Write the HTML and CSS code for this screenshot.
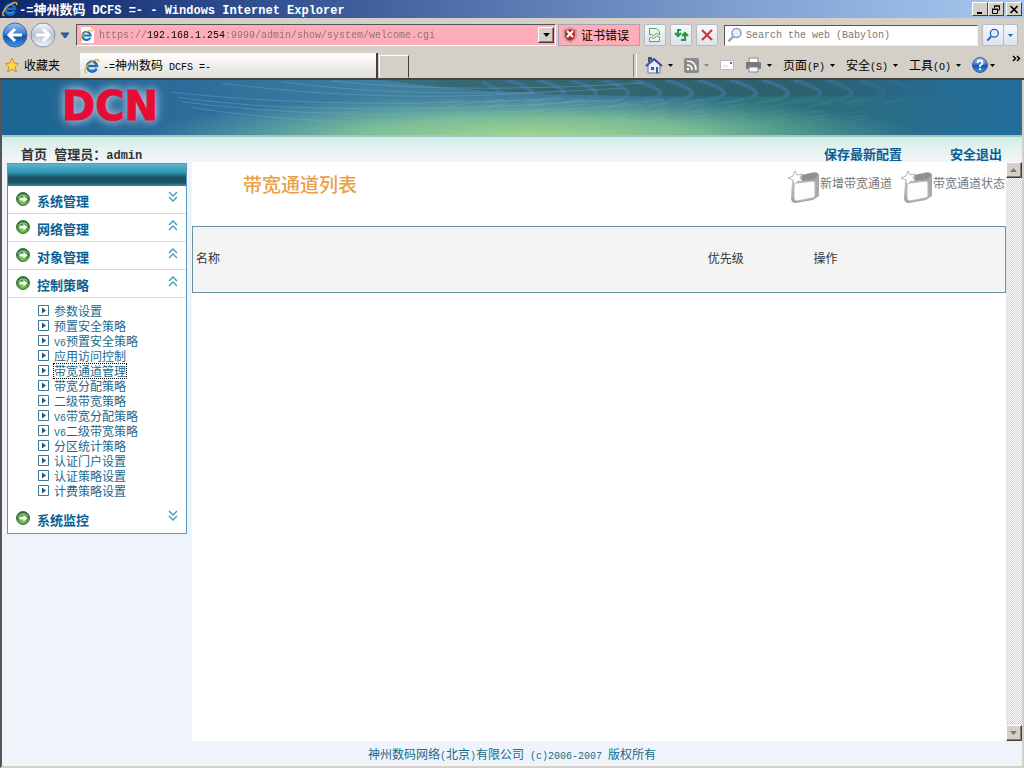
FILE: index.html
```html
<!DOCTYPE html>
<html lang="zh-CN">
<head>
  <meta charset="UTF-8">
  <meta name="viewport" content="width=device-width, initial-scale=1">
  <title>-=神州数码 DCFS =-</title>
  <link rel="stylesheet" href="styles.css">
</head>
<body>
  <!-- shared icons -->
  <svg class="defs" width="0" height="0" aria-hidden="true">
    <defs>
      <linearGradient id="blue" x1="0" y1="0" x2="0" y2="1"><stop offset="0" stop-color="#9cc4ee"/><stop offset=".45" stop-color="#3f7fd0"/><stop offset=".55" stop-color="#1450ac"/><stop offset="1" stop-color="#3f9be8"/></linearGradient>
      <linearGradient id="silver" x1="0" y1="0" x2="0" y2="1"><stop offset="0" stop-color="#f4f6fa"/><stop offset=".5" stop-color="#b8c1d2"/><stop offset="1" stop-color="#f2f5f9"/></linearGradient>
      <radialGradient id="green" cx=".5" cy=".7" r=".7"><stop offset="0" stop-color="#8ed052"/><stop offset="1" stop-color="#1c682a"/></radialGradient>
      <linearGradient id="folder" x1="0" y1="0" x2="1" y2="1"><stop offset="0" stop-color="#ddd"/><stop offset=".5" stop-color="#a0a0a0"/><stop offset="1" stop-color="#b4b4b4"/></linearGradient>
      <symbol id="ie" viewBox="0 0 16 16">
        <path d="M12.600 10.600A5 5 0 1 1 13 8H4.500" fill="none" stroke="#1c6cc4" stroke-width="2.600"/>
        <path d="M12 10A5 5 0 0 1 4 9.500" fill="none" stroke="#58b4ee" stroke-width="1"/>
        <path d="M2.500 14.500C-1 15 1 9 6 5S15.500 0 14.500 4" fill="none" stroke="#e8b82c" stroke-width="1.400"/>
      </symbol>
      <symbol id="go" viewBox="0 0 14 14">
        <circle cx="7" cy="7" r="6.500" fill="url(#green)" stroke="#3c7844"/>
        <path d="M2.500 5.500A5 4 0 0 1 11.500 5" fill="none" stroke="#b4d8b0"/>
        <path d="M3.500 5.800h4V3.800L11.500 7.200 7.500 10.500V8.600h-4z" fill="#fff"/>
      </symbol>
      <symbol id="down2" viewBox="0 0 10 12"><path d="M1 1l4 4 4-4M1 6l4 4 4-4" fill="none" stroke="#3b9cb8" stroke-width="1.300"/></symbol>
      <symbol id="up2" viewBox="0 0 10 12"><path d="M1 6l4-4 4 4M1 11l4-4 4 4" fill="none" stroke="#3b9cb8" stroke-width="1.300"/></symbol>
      <symbol id="bullet" viewBox="0 0 11 11"><path d="M.5.5h10v10H.5z" fill="#fff" stroke="#3d7795"/><path d="M4 2.500l4 3-4 3z" fill="#27556e"/></symbol>
      <symbol id="caret" viewBox="0 0 5 3"><path d="M0 0h5L2.500 3z"/></symbol>
      <symbol id="lens" viewBox="0 0 16 16"><path d="M1.500 14.500L6 9.500" stroke="currentColor" stroke-width="2.200"/><circle cx="9.500" cy="6" r="4.500" fill="#e4f1fc" stroke="currentColor" stroke-width="1.500"/></symbol>
      <symbol id="box" viewBox="0 0 32 34">
        <path d="M4 12L13 5 26 2Q31 2 31 6V26L25 30 8 33Q3 33 3 28z" fill="url(#folder)"/>
        <path d="M14 5L26 3 30 5 26 9 14 11z" fill="#8f8f8f"/>
        <path d="M27 10l3-4v19l-3 3z" fill="#a8a8a8"/>
        <path d="M6 15Q6 13 9 13L25 11Q27 11 27 13V26Q26 28 24 28L9 31Q6 31 6 28z" fill="#fdfdfd" stroke="#bbb"/>
        <path d="M7 1l2 4 5-1-2 4 3 4-5-1-4 4-1-5-5-2 5-2z" fill="#fff" stroke="#b4b4b4"/>
      </symbol>
    </defs>
  </svg>

  <header class="titlebar">
    <svg class="i16"><use href="#ie"/></svg>
    <span class="caption"><span class="en">-=</span>神州数码<span class="en"> DCFS =- - Windows Internet Explorer</span></span>
    <div class="winbtns">
      <button type="button" aria-label="最小化"><svg width="10" height="9"><path d="M2 8h5" stroke="#000" stroke-width="2"/></svg></button>
      <button type="button" aria-label="还原"><svg width="10" height="9"><path d="M3.500 3V1h5v4H7M3 1h6M1.500 4.500h5v4h-5zM1 4h6" fill="none" stroke="#000"/></svg></button>
      <button type="button" aria-label="关闭"><svg width="10" height="9"><path d="M1.500 1l7 7m0-7l-7 7" stroke="#000" stroke-width="1.600"/></svg></button>
    </div>
  </header>

  <div class="navbar">
    <div class="history">
      <button type="button" aria-label="后退"><svg width="26" height="26"><circle cx="13" cy="13" r="12" fill="url(#blue)" stroke="#41659a"/><path d="M20 13H8m5-6l-6 6 6 6" fill="none" stroke="#fff" stroke-width="3"/></svg></button>
      <button type="button" aria-label="前进"><svg width="26" height="26"><circle cx="13" cy="13" r="12" fill="url(#silver)" stroke="#8391ad"/><path d="M6 13h12m-5-6l6 6-6 6" fill="none" stroke="#fff" stroke-width="3"/></svg></button>
      <button type="button" aria-label="最近的页面"><svg width="10" height="7"><path d="M1 1h8L5 6z" fill="#286cb0" stroke="#285078"/></svg></button>
    </div>
    <div class="address">
      <svg class="i16"><path d="M2 0h9l4 4v12H2z" fill="#fff"/><use href="#ie" x="1" y="2" width="13" height="13"/></svg>
      <input type="text" class="url" aria-label="地址" value="https://192.168.1.254:9999/admin/show/system/welcome.cgi">
      <button type="button" class="raised" aria-label="历史地址"><svg width="7" height="4"><use href="#caret"/></svg></button>
    </div>
    <button type="button" class="cert"><svg width="14" height="16"><path d="M7 1l6 2v5q0 5-6 7-6-2-6-7V3z" fill="#c8262c" stroke="#b8a8a8" stroke-width="2"/><path d="M4 4l6 6m0-6l-6 6" stroke="#fff" stroke-width="2"/></svg>证书错误</button>
    <button type="button" class="tool" aria-label="兼容性视图"><svg width="14" height="16"><path d="M1.500 8V1.500h7l3 3V8l-3-2-3 3-2-2zM1.500 11v3.500h10V10l-3-1-3 3-2-2z" fill="#e9f6e6" stroke="#5fa062"/></svg></button>
    <button type="button" class="tool" aria-label="刷新"><svg width="16" height="14"><path d="M8 2H5v4m-3-1l3 3 3-3M8 12h4V7M9 8l3-3 3 3" fill="none" stroke="#259540" stroke-width="2"/></svg></button>
    <button type="button" class="tool" aria-label="停止"><svg width="12" height="12"><path d="M1 1l10 10m0-10L1 11" stroke="#c8323c" stroke-width="2"/></svg></button>
    <div class="search">
      <svg class="i16 grey"><use href="#lens"/></svg>
      <input type="text" aria-label="搜索" placeholder="Search the web (Babylon)">
    </div>
    <div class="searchbtns">
      <button type="button" class="tool" aria-label="搜索"><svg width="14" height="14"><use href="#lens"/></svg></button>
      <button type="button" class="tool thin" aria-label="搜索选项"><svg width="5" height="3"><use href="#caret"/></svg></button>
    </div>
  </div>

  <div class="tabbar">
    <button type="button" class="fav"><svg class="i16"><path d="M8 1l2 5 5 .5-4 3.500 1.500 5L8 12.200 3.500 15 5 10 1 6.500 6 6z" fill="#ffd84c" stroke="#d88a20"/></svg>收藏夹</button>
    <button type="button" class="tab"><svg class="i16"><use href="#ie"/></svg><span><span class="en">-=</span>神州数码<span class="en"> DCFS =-</span></span></button>
    <button type="button" class="newtab" aria-label="新选项卡"></button>
    <div class="commands">
      <button type="button" aria-label="主页"><svg width="18" height="17"><path d="M3 8v8h12V8L9 3z" fill="#e8edf8" stroke="#66789c"/><path d="M1 9l8-7 8 7M4 5V1h2v2" fill="none" stroke="#39509c" stroke-width="2"/><path d="M6 10h3v3H6zM11 10h2v6h-2z" fill="#34629c"/></svg><svg class="caret"><use href="#caret"/></svg></button>
      <button type="button" aria-label="源"><svg width="15" height="15"><rect width="15" height="15" rx="2" fill="#8b8b8b"/><path d="M3 3q9 0 9 9M3 7q5 0 5 5" fill="none" stroke="#fff" stroke-width="1.600"/><circle cx="4" cy="11" r="1.300" fill="#fff"/></svg><svg class="caret off"><use href="#caret"/></svg></button>
      <button type="button" aria-label="阅读邮件"><svg width="14" height="10"><path d="M.5.5h13v9H.5z" fill="#fff" stroke="#b8b8c4"/><path d="M10 2h2v2h-2z" fill="#d83c3c"/><path d="M3 6h5" stroke="#ccc"/></svg></button>
      <button type="button" aria-label="打印"><svg width="17" height="16"><path d="M4 1h9v5H4z" fill="#fff" stroke="#888"/><rect x="1" y="5" width="15" height="7" rx="1" fill="#76797e"/><path d="M4 10h9v5H4z" fill="#f4f8ff" stroke="#888"/></svg><svg class="caret"><use href="#caret"/></svg></button>
      <button type="button"><span>页面<span class="en">(P)</span></span><svg class="caret"><use href="#caret"/></svg></button>
      <button type="button"><span>安全<span class="en">(S)</span></span><svg class="caret"><use href="#caret"/></svg></button>
      <button type="button"><span>工具<span class="en">(O)</span></span><svg class="caret"><use href="#caret"/></svg></button>
      <button type="button" class="help" aria-label="帮助"><svg width="16" height="16"><circle cx="8" cy="8" r="7.500" fill="url(#blue)" stroke="#3c5ca0"/><path d="M5.500 6Q5.500 3.500 8 3.500T10.500 6Q10.500 7 8 8.500V10M8 11v2" fill="none" stroke="#fff" stroke-width="1.800"/></svg><svg class="caret"><use href="#caret"/></svg></button>
      <button type="button" class="more" aria-label="更多"><svg width="9" height="7"><path d="M1 1l2.500 2.500L1 6M5 1l2.500 2.500L5 6" fill="none" stroke="#000" stroke-width="1.500"/></svg></button>
    </div>
  </div>

  <div class="page">
    <div class="banner">
      <svg class="waves" viewBox="0 0 1020 54" preserveAspectRatio="none" aria-hidden="true">
        <defs>
          <linearGradient id="sea"><stop offset="0" stop-color="#1c6491"/><stop offset=".18" stop-color="#2c6c9a"/><stop offset=".38" stop-color="#41809f"/><stop offset=".6" stop-color="#3c7490"/><stop offset=".8" stop-color="#2b6784"/><stop offset=".93" stop-color="#266d94"/><stop offset="1" stop-color="#226e9c"/></linearGradient>
          <linearGradient id="teal"><stop offset="0" stop-color="#28796e" stop-opacity="0"/><stop offset=".4" stop-color="#28796e" stop-opacity=".55"/><stop offset="1" stop-color="#28796e" stop-opacity="0"/></linearGradient>
          <radialGradient id="glow" gradientUnits="userSpaceOnUse" cx="0" cy="0" r="1" gradientTransform="translate(530 56) scale(390 42)"><stop offset="0" stop-color="#a3d890"/><stop offset=".45" stop-color="#8bcd95" stop-opacity=".8"/><stop offset="1" stop-color="#6cbcb0" stop-opacity="0"/></radialGradient>
          <pattern id="arcs" width="32" height="54" patternUnits="userSpaceOnUse"><path d="M-8 0Q40 14 0 20M24 0Q72 14 32 20M-20 34Q24 20 44 18" fill="none" stroke="#4179a8" stroke-width="4"/></pattern>
          <pattern id="dashes" width="40" height="28" patternUnits="userSpaceOnUse"><path d="M2 5l20-3M8 9l20-3M4 13l20-3M10 17l20-3M2 22l20-3M6 26l20-3" stroke="#7dc0b9"/></pattern>
          <linearGradient id="fade"><stop offset="0" stop-color="#fff" stop-opacity="0"/><stop offset=".25" stop-color="#fff"/><stop offset=".75" stop-color="#fff"/><stop offset="1" stop-color="#fff" stop-opacity="0"/></linearGradient>
          <mask id="edges"><path d="M280 0h660v54H280z" fill="url(#fade)"/></mask>
        </defs>
        <path d="M0 0h1020v54H0z" fill="url(#sea)"/>
        <g mask="url(#edges)">
          <path d="M380 0h560v14q-140 4-300 2T380 0z" fill="#2d5954" opacity=".55"/>
          <path d="M480 0h460v24H480z" fill="url(#arcs)" opacity=".6"/>
          <path d="M440 18h460v24H440z" fill="url(#dashes)" opacity=".35"/>
        </g>
        <path d="M640 16h320v38H640z" fill="url(#teal)"/>
        <path d="M0 0h1020v54H0z" fill="url(#glow)"/>
        <g fill="none" stroke="#78b5ce" opacity=".35">
          <path d="M170 12Q330 30 560 18M175 17Q330 38 600 20M180 21Q340 44 640 24M190 27Q340 50 500 36M220 3Q380 24 560 11M280 2Q420 20 620 8M330 1Q460 14 640 3"/>
        </g>
      </svg>
      <span class="logo">DCN</span>
    </div>

    <nav class="topnav">
      <span class="who"><a href="#">首页</a><span class="en"> </span>管理员：<span class="en">admin</span></span>
      <a href="#" class="save">保存最新配置</a>
      <a href="#">安全退出</a>
    </nav>

    <div class="body">
      <aside class="side">
        <div class="menu">
          <div class="menuhead"></div>
          <a href="#" class="group"><svg class="go"><use href="#go"/></svg><span>系统管理</span><svg class="fold"><use href="#down2"/></svg></a>
          <a href="#" class="group"><svg class="go"><use href="#go"/></svg><span>网络管理</span><svg class="fold"><use href="#up2"/></svg></a>
          <a href="#" class="group"><svg class="go"><use href="#go"/></svg><span>对象管理</span><svg class="fold"><use href="#up2"/></svg></a>
          <a href="#" class="group"><svg class="go"><use href="#go"/></svg><span>控制策略</span><svg class="fold"><use href="#up2"/></svg></a>
          <ul>
            <li><svg><use href="#bullet"/></svg><a href="#">参数设置</a></li>
            <li><svg><use href="#bullet"/></svg><a href="#">预置安全策略</a></li>
            <li><svg><use href="#bullet"/></svg><a href="#"><span class="en">V6</span>预置安全策略</a></li>
            <li><svg><use href="#bullet"/></svg><a href="#">应用访问控制</a></li>
            <li><svg><use href="#bullet"/></svg><a href="#" class="current">带宽通道管理</a></li>
            <li><svg><use href="#bullet"/></svg><a href="#">带宽分配策略</a></li>
            <li><svg><use href="#bullet"/></svg><a href="#">二级带宽策略</a></li>
            <li><svg><use href="#bullet"/></svg><a href="#"><span class="en">V6</span>带宽分配策略</a></li>
            <li><svg><use href="#bullet"/></svg><a href="#"><span class="en">V6</span>二级带宽策略</a></li>
            <li><svg><use href="#bullet"/></svg><a href="#">分区统计策略</a></li>
            <li><svg><use href="#bullet"/></svg><a href="#">认证门户设置</a></li>
            <li><svg><use href="#bullet"/></svg><a href="#">认证策略设置</a></li>
            <li><svg><use href="#bullet"/></svg><a href="#">计费策略设置</a></li>
          </ul>
          <a href="#" class="group"><svg class="go"><use href="#go"/></svg><span>系统监控</span><svg class="fold"><use href="#down2"/></svg></a>
        </div>
      </aside>

      <main>
        <div class="heading">
          <h1>带宽通道列表</h1>
          <a href="#" class="action"><svg><use href="#box"/></svg>新增带宽通道</a>
          <a href="#" class="action"><svg><use href="#box"/></svg>带宽通道状态</a>
        </div>
        <table>
          <thead>
            <tr><th class="name">名称</th><th class="prio">优先级</th><th>操作</th></tr>
          </thead>
        </table>
      </main>

      <div class="scroll">
        <button type="button" class="raised" aria-label="向上滚动"><svg width="8" height="5"><path d="M0 4h7L3.500 0z" fill="#777"/></svg></button>
        <button type="button" class="raised" aria-label="向下滚动"><svg width="8" height="5"><path d="M0 0h7L3.500 4z" fill="#777"/></svg></button>
      </div>
    </div>

    <footer>神州数码网络<span class="en">(</span>北京<span class="en">)</span>有限公司<span class="en"> (c)2006-2007 </span>版权所有</footer>
  </div>
</body>
</html>
```

FILE: styles.css
```css
* { box-sizing: border-box; }
body { margin: 0; height: 100vh; display: flex; flex-direction: column; background: #d4d0c8; font: 12px/16px "Noto Sans CJK SC", sans-serif; color: #000; overflow: hidden; }
svg { flex: none; display: block; }
.defs { position: absolute; }
a { color: #0a5f94; text-decoration: none; }
button { font: inherit; color: inherit; border: 0; background: none; padding: 0; display: flex; align-items: center; justify-content: center; flex: none; }
input { border: 0; padding: 2px 0 0; background: none; outline: 0; min-width: 0; flex: 1; font: 10px/16px "Liberation Mono", monospace; }
.en { font-family: "Liberation Mono", monospace; font-size: 10px; line-height: 12px; white-space: pre; }
.i16 { width: 16px; height: 16px; }
.raised { width: 16px; height: 16px; background: #d4d0c8; border: 1px solid; border-color: #fff #404040 #404040 #fff; box-shadow: inset -1px -1px #808080; }

/* title bar */
.titlebar { flex: none; height: 18px; display: flex; align-items: center; padding: 0 2px; background: linear-gradient(90deg, #0e286e, #3e5f9c 35%, #7c9cce 70%, #a6caf0); color: #fff; font-size: 13px; font-weight: bold; }
.titlebar .caption { flex: 1; margin-left: 1px; }
.titlebar .en, .who .en { font-size: 12px; }
.winbtns { display: flex; }
.winbtns button { width: 16px; height: 14px; background: #d4d0c8; border: 1px solid; border-color: #fff #404040 #404040 #fff; }
.winbtns button:last-child { margin-left: 2px; }

/* address row */
.navbar { flex: none; height: 34px; display: flex; align-items: center; gap: 4px; padding: 0 6px 0 2px; }
.history { display: flex; gap: 2px; width: 70px; }
.history button:last-child { margin-left: 2px; }
.address { flex: 1; height: 22px; display: flex; align-items: center; padding: 0 1px 0 2px; background: #ffaeb9; border: 1px solid; border-color: #555 #fff #fff #555; }
/* host part of the address is dark, the rest is grey */
.url { margin-left: 4px; color: transparent; background: linear-gradient(90deg, #8c6f74 48px, #000 48px, #000 126px, #8c6f74 126px); -webkit-background-clip: text; background-clip: text; }
.cert { width: 82px; height: 22px; gap: 4px; justify-content: flex-start; padding-left: 4px; background: #ffaeb9; border: 1px solid #a8a0b8; margin-left: -2px; }
.tool { width: 22px; height: 22px; background: linear-gradient(#f6f8fb, #dde3ec); border: 1px solid #b4bac6; border-radius: 2px; }
.search { width: 254px; height: 21px; display: flex; align-items: center; gap: 3px; margin-left: 2px; padding-left: 2px; background: #fff; border: 1px solid; border-color: #555 #eee #eee #555; }
.search input::placeholder { color: #777; }
.grey { color: #8ba0bc; }
.searchbtns { display: flex; color: #2464b4; fill: #2464b4; }
.searchbtns .thin { width: 14px; border-left: 0; }

/* tab row */
.tabbar { flex: none; height: 28px; display: flex; align-items: flex-end; border-bottom: 2px solid #404540; }
.fav { width: 80px; height: 26px; gap: 4px; justify-content: flex-start; padding-left: 4px; }
.tab { width: 298px; height: 25px; gap: 3px; justify-content: flex-start; padding-left: 4px; background: linear-gradient(#fff, #e2dfd9); border-right: 2px solid #404040; }
.newtab { width: 30px; height: 23px; margin-left: 1px; border: 1px solid; border-color: #fff #404040 transparent #fff; }
.commands { flex: 1; height: 26px; display: flex; align-items: center; justify-content: flex-end; gap: 11px; padding-right: 3px; }
.commands::before { content: ""; width: 2px; height: 23px; border-left: 1px solid #888; border-right: 1px solid #fff; margin-right: -3px; }
.commands button { gap: 5px; }
.commands .caret { width: 5px; height: 3px; }
.commands .off { fill: #888; }
.commands .help { gap: 2px; }
.commands .more { align-self: flex-start; margin: 3px 0 0 6px; }

/* web page */
.page { flex: 1; min-height: 0; display: flex; flex-direction: column; background: #eef4f9; border-left: 2px solid #555; border-right: 2px solid #d4d0c8; border-bottom: 2px solid #d4d0c8; }
.banner { flex: none; height: 57px; position: relative; border-bottom: 2px solid #9cc6cc; }
.waves { width: 100%; height: 55px; }
.logo { position: absolute; left: 60px; top: 6px; font: bold 40px/40px "DejaVu Sans", sans-serif; color: #e80c34; -webkit-text-stroke: 1px #e80c34; text-shadow: 0 0 8px #a4bcdc, 0 0 12px #a4c0e0; }
.topnav { flex: none; height: 25px; display: flex; align-items: flex-end; padding: 0 20px 0 19px; background: linear-gradient(#d2eee4, #eef4f7 80%); font-size: 13px; font-weight: bold; }
.who { flex: 1; color: #333; }
.who a { color: inherit; }
.save { margin-right: 48px; }
.body { flex: 1; min-height: 0; display: flex; }

.side { flex: none; width: 190px; padding: 1px 5px 0; }
.menu { background: #fff; border: 1px solid #5b9bbb; }
.menuhead { height: 22px; background: linear-gradient(#5cb4cc, #2f94b2 40%, #1c5262 60%, #1c5464 85%, #3c90a4); }
.group { display: flex; align-items: flex-start; height: 28px; padding: 0 8px; border-bottom: 1px solid #bfe6ee; font-size: 13px; font-weight: bold; }
.group span { flex: 1; margin: 7px 0 0 7px; }
.group:last-child { border-bottom: 0; }
.go { width: 14px; height: 14px; margin-top: 6px; }
.fold { width: 10px; height: 12px; margin-top: 5px; }
.menu ul { list-style: none; margin: 0; padding: 5px 0 7px 30px; }
.menu li { display: flex; align-items: center; gap: 5px; height: 15px; line-height: 14px; }
.menu li svg { width: 11px; height: 11px; }
.menu li a { display: block; height: 14px; color: #19698f; }
.menu .current { outline: 1px dotted #000; }

main { flex: 1; min-width: 0; background: #fff; }
.heading { display: flex; height: 64px; padding: 8px 1px 0 51px; }
h1 { flex: 1; margin: 2px 0 0; font-size: 19px; line-height: 24px; font-weight: 500; color: #eba048; }
.action { display: flex; height: 34px; line-height: 26px; color: #777; }
.action + .action { margin-left: 9px; }
.action svg { width: 32px; height: 34px; }
table { width: 100%; height: 67px; border-collapse: collapse; table-layout: fixed; background: #f4f4f4; border: 1px solid #6b929f; }
th { padding: 0 0 4px 3px; font-weight: normal; text-align: left; color: #333; }
.name { width: 63%; }
.prio { width: 13%; }

.scroll { flex: none; width: 16px; display: flex; flex-direction: column; justify-content: space-between; background: repeating-conic-gradient(#d4d0c8 0 25%, #fff 0 50%) 0 0 / 2px 2px; }
footer { flex: none; height: 25px; padding-top: 5px; text-align: center; color: #19698f; }
```
